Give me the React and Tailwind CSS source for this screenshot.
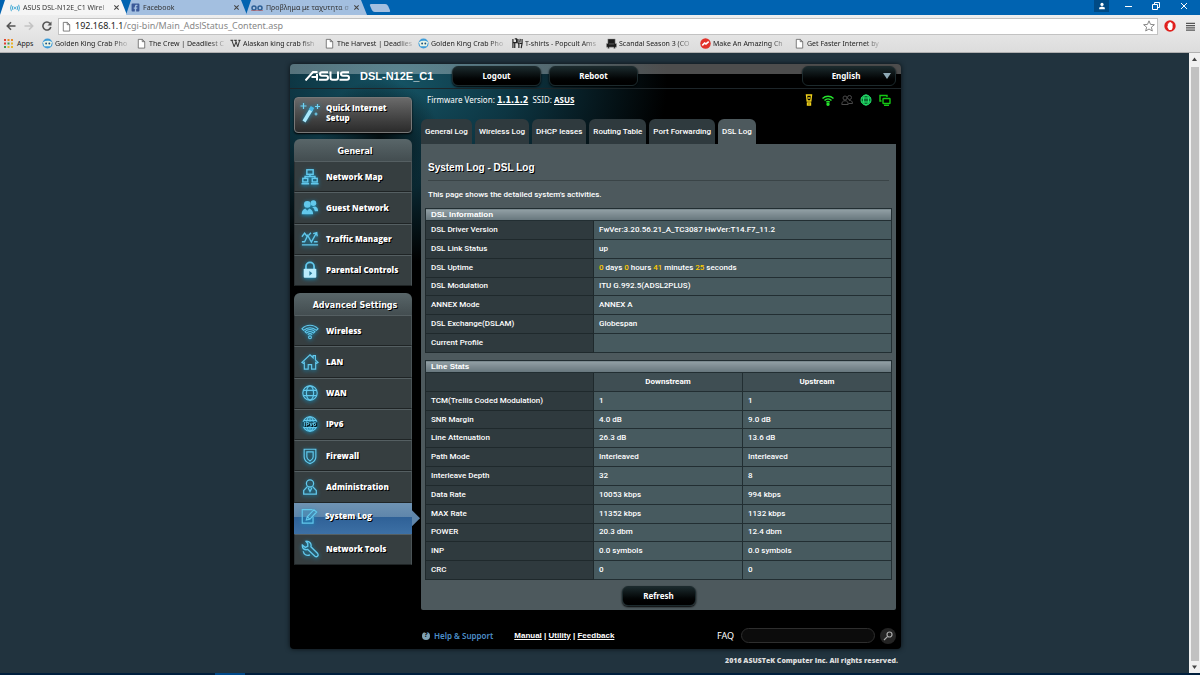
import { FaFacebookSquare } from 'react-icons/fa'

const VERDANA = "font-['DejaVu_Sans',sans-serif]"
const TAHOMA = "font-['Noto_Sans',sans-serif]"
const HEAVY = "font-['Open_Sans',sans-serif] font-extrabold"
const BTN = 'h-5 rounded-md border border-[#1c2a2d] bg-linear-to-b from-[#1b2a2d] via-[#080d0e] to-black text-[8px] font-bold text-white shadow-[0_1px_2px_#000]'

const BOOKMARKS = [
  { label: 'Golden King Crab Pho', icon: 'fish' },
  { label: 'The Crew | Deadliest C', icon: 'page' },
  { label: 'Alaskan king crab fish', icon: 'wiki' },
  { label: 'The Harvest | Deadlies', icon: 'page' },
  { label: 'Golden King Crab Pho', icon: 'fish' },
  { label: 'T-shirts - Popcult Ams', icon: 'shirt' },
  { label: 'Scandal Season 3 (CO', icon: 'sofa' },
  { label: 'Make An Amazing Ch', icon: 'chart' },
  { label: 'Get Faster Internet by', icon: 'page' },
]

const GENERAL = [
  { label: 'Network Map', icon: 'map' },
  { label: 'Guest Network', icon: 'guest' },
  { label: 'Traffic Manager', icon: 'traffic' },
  { label: 'Parental Controls', icon: 'lock' },
]

const ADVANCED = [
  { label: 'Wireless', icon: 'wifi' },
  { label: 'LAN', icon: 'house' },
  { label: 'WAN', icon: 'globe' },
  { label: 'IPv6', icon: 'ipv6' },
  { label: 'Firewall', icon: 'shield' },
  { label: 'Administration', icon: 'admin' },
  { label: 'System Log', icon: 'log' },
  { label: 'Network Tools', icon: 'tools' },
]

const LOG_TABS = ['General Log', 'Wireless Log', 'DHCP leases', 'Routing Table', 'Port Forwarding', 'DSL Log']

const Num = ({ children }) => <span className="text-[#fc0]">{children}</span>

const DSL_INFO = [
  ['DSL Driver Version', 'FwVer:3.20.56.21_A_TC3087 HwVer:T14.F7_11.2'],
  ['DSL Link Status', 'up'],
  ['DSL Uptime', <><Num>0</Num> days <Num>0</Num> hours <Num>41</Num> minutes <Num>25</Num> seconds</>],
  ['DSL Modulation', 'ITU G.992.5(ADSL2PLUS)'],
  ['ANNEX Mode', 'ANNEX A'],
  ['DSL Exchange(DSLAM)', 'Globespan'],
  ['Current Profile', ''],
]

const LINE_STATS = [
  ['TCM(Trellis Coded Modulation)', '1', '1'],
  ['SNR Margin', '4.0 dB', '9.0 dB'],
  ['Line Attenuation', '26.3 dB', '13.6 dB'],
  ['Path Mode', 'Interleaved', 'Interleaved'],
  ['Interleave Depth', '32', '8'],
  ['Data Rate', '10053 kbps', '994 kbps'],
  ['MAX Rate', '11352 kbps', '1132 kbps'],
  ['POWER', '20.3 dbm', '12.4 dbm'],
  ['INP', '0.0 symbols', '0.0 symbols'],
  ['CRC', '0', '0'],
]

const MENU_ICONS = {
  map: (
    <g fill="none" strokeWidth="1.6">
      <rect x="6.5" y="2" width="7" height="5" />
      <rect x="2" y="11.5" width="5.5" height="4" /><rect x="12.5" y="11.5" width="5.5" height="4" />
      <path d="M10 7v2.5M4.5 11.5V9.5h11v2M.5 17.5h8.5M11 17.5h8.5" />
    </g>
  ),
  guest: (
    <g stroke="none" fill="currentColor">
      <circle cx="13.8" cy="4.6" r="3.1" /><circle cx="7" cy="6" r="3.7" />
      <path d="M12.3 9l3.5-.6c2.2.7 3.2 2.4 3.2 5.1h-3.6C14.8 11.3 13.8 10 12.3 9z" />
      <path d="M.8 17c0-3.8 1.5-5.7 4-6.5L7 13l2.2-2.5c2.5.8 4.3 2.7 4.3 6.5z" />
    </g>
  ),
  traffic: (
    <g fill="none" strokeWidth="1.5">
      <path d="M1 13h3l3.500-7 4 7.500L17 3.500M13.500 4l4-1 .5 4M1 7.500l3-4 3 4M8.500 6L11 3M14.500 13h4M1 16.500h18" />
    </g>
  ),
  lock: (
    <g>
      <path d="M5.500 9V6a4.500 4.500 0 0 1 9 0v3" fill="none" strokeWidth="2" />
      <rect x="3" y="8.500" width="14" height="10" rx="1" fill="#b9ecfd" stroke="none" />
      <path d="M9.300 11l3.200 2.500-3.200 2.800z" fill="#28799a" stroke="none" />
    </g>
  ),
  wifi: (
    <g fill="none" strokeWidth="1.2">
      <path d="M1 7.500C6 2.200 14 2.200 19 7.500l-1.800 1.800C13 5.300 7 5.300 2.800 9.300zM4.500 10.800c3.200-3.200 7.800-3.200 11 0l-1.500 1.500c-2.300-2.200-5.700-2.200-8 0zM7.500 14c1.500-1.300 3.500-1.300 5 0" />
      <circle cx="10" cy="17" r="1.600" />
    </g>
  ),
  house: (
    <path d="M1 10.500L10 2l3.500 3.300V3H16v4.700l3 2.800-1.500 1-1.200-1V18h-4.500v-5H8v5H3.700v-7.500l-1.200 1z" fill="none" strokeWidth="1.3" />
  ),
  globe: (
    <g fill="none" strokeWidth="1.3">
      <circle cx="10" cy="10" r="8" /><ellipse cx="10" cy="10" rx="4" ry="8" />
      <path d="M2.500 7h15M2.500 13h15" />
    </g>
  ),
  ipv6: (
    <g>
      <g fill="none" strokeWidth="1.2">
        <circle cx="10" cy="10" r="8" /><ellipse cx="10" cy="10" rx="4" ry="8" /><path d="M3 6h14M3 14h14M10 2v16" />
      </g>
      <rect x="1" y="7.500" width="18" height="5.500" fill="#1d5468" stroke="none" />
      <text x="10" y="12.500" textAnchor="middle" fontSize="6.5" fontWeight="bold" fill="currentColor" stroke="none">IPv6</text>
    </g>
  ),
  shield: (
    <g fill="none" strokeWidth="1.3">
      <path d="M3.500 2.500h13V11c0 3.500-3 6-6.500 7.500C6.500 17 3.500 14.500 3.500 11z" />
      <path d="M6.500 5.500h7V11c0 2-1.500 3.300-3.500 4.500-2-1.200-3.500-2.500-3.500-4.500z" />
    </g>
  ),
  admin: (
    <g fill="none" strokeWidth="1.4">
      <circle cx="10" cy="6" r="4" />
      <path d="M7 9.500L3 14v4h14v-4l-4-4.500M8 11l2 4 2-4" />
    </g>
  ),
  log: (
    <g fill="none" strokeWidth="1.3">
      <path d="M14 3H2.500v15h12v-7" /><path d="M7 14.500l1-3.700L15.500 3 18.500 5.500 11 13.500zM8 10.800l3 2.700" />
    </g>
  ),
  tools: (
    <g fill="none" strokeWidth="1.5">
      <path d="M5.500 1.500c4-.5 6.500 2.500 5.500 6l7.500 7.500c1.500 2.500-1 4.500-3 3l-8-7.500C4 11.500 1 9.500 1.500 5.500l3.300 2.800L7.500 7V4z" />
      <path d="M2.500 12.500c.5 3.500 3.500 5.500 7.500 4" />
    </g>
  ),
}

function MenuIcon({ name }) {
  return (
    <svg viewBox="0 0 20 20" stroke="currentColor" className="size-[18px] shrink-0 text-[#62c8ec] drop-shadow-[0_1px_2px_#1294c4]">
      {MENU_ICONS[name]}
    </svg>
  )
}

const BOOKMARK_ICONS = {
  page: <path d="M2.500 1.500H7L9.500 4v7h-7zM6.800 1.500V4h2.700" fill="#fff" stroke="#666" strokeWidth=".9" />,
  fish: (
    <g>
      <circle cx="6" cy="6" r="5.500" fill="#3d9bd8" /><path d="M1 4.500c3-2 7-2 10 0L9.500 9h-7z" fill="#e9f3e4" />
      <circle cx="4.500" cy="6" r="1" fill="#174c7c" /><circle cx="8" cy="6" r="1" fill="#174c7c" />
    </g>
  ),
  wiki: <path d="M.5 2.500h3M4.500 2.500h3M9 2.500h2.500M2 2.500l2.500 7 2-5M6 2.500l2.500 7 2-7" fill="none" stroke="#222" strokeWidth="1" />,
  shirt: <path d="M1 1v10M3 1h2v4H3v6M6.500 1v4l1 2v4M9 1l-.5 4M11 1v5l-1 5M1 5h4M8 6h3" fill="none" stroke="#222" strokeWidth="1.3" />,
  sofa: <path d="M2 1h8v5h1.500v4H10v1.500H8.500V10h-5v1.500H2V10H.5V6H2zM3 6.500h6" fill="#1b1b1b" stroke="#aaa" strokeWidth=".5" />,
  chart: <g><circle cx="6" cy="6" r="5.700" fill="#e2322a" /><path d="M2.500 8L5 5.500l1.500 1L9.500 4" fill="none" stroke="#fff" strokeWidth="1.7" /></g>,
}

function BrowserTab({ active, icon, title }) {
  return (
    <div className={`flex h-[15px] items-center gap-[3px] pr-[7px] [clip-path:polygon(0_100%,5px_0,calc(100%-6px)_0,100%_100%)] ${active ? 'w-[127px] bg-[#f5f5f5] pl-2.5' : '-ml-px w-[121px] bg-[#a3bfe0] pl-[5px]'}`}>
      {icon}
      <span className="flex-1 text-[7px] leading-[14px] whitespace-nowrap text-[#333] [mask-image:linear-gradient(90deg,#000_85%,#0003)]">{title}</span>
      <button aria-label="Close tab" className="text-[#444]">
        <svg viewBox="0 0 8 8" className="size-[7px]"><path d="M1.500 1.500l5 5M6.500 1.500l-5 5" stroke="currentColor" strokeWidth="1.2" /></svg>
      </button>
    </div>
  )
}

function BrowserChrome() {
  return (
    <header className={`${TAHOMA} bg-linear-to-b from-[#f5f5f5] to-[#dcdcdc]`}>
      <div className="flex h-[15px] items-start bg-[#0063b1]">
        <BrowserTab
          active
          title="ASUS DSL-N12E_C1 Wirel"
          icon={<svg viewBox="0 0 12 10" className="h-2 w-2.5 shrink-0" fill="none" stroke="#2a9fd0" strokeWidth="1.1"><circle cx="6" cy="5" r="1" /><path d="M3.500 2.500q-1.500 2.500 0 5M1.500 1q-2 4 0 8M8.500 2.500q1.500 2.500 0 5M10.500 1q2 4 0 8" /></svg>}
        />
        <BrowserTab title="Facebook" icon={<FaFacebookSquare className="size-[9px] shrink-0 text-[#3b5998]" />} />
        <BrowserTab
          title="Προβλημα με ταχυτητα σ"
          icon={<svg viewBox="0 0 12 8" className="h-2 w-3 shrink-0" fill="none" stroke="#2d5f95" strokeWidth="1.5"><circle cx="3" cy="4" r="2" /><circle cx="9" cy="4" r="2" /><path d="M0 6.500h12" stroke="#b55" strokeWidth=".6" /></svg>}
        />
        <button aria-label="New tab" className="mt-1 ml-1 h-2 w-[18px] skew-x-[24deg] rounded-xs bg-[#a3bfe0]" />
        <div className="ml-auto flex items-center text-white">
          <button aria-label="User" className="mr-4 flex h-3 w-[15px] items-center justify-center bg-[#004a85]">
            <svg viewBox="0 0 10 10" className="size-2" fill="currentColor"><circle cx="5" cy="3" r="2" /><path d="M1.500 9V7l3.500-1.500L8.500 7v2z" /></svg>
          </button>
          <button aria-label="Minimize" className="mr-5 h-px w-[7px] bg-white" />
          <button aria-label="Restore" className="mr-5">
            <svg viewBox="0 0 8 8" className="size-2" fill="none" stroke="currentColor"><path d="M.5 2.500h5v5h-5zM2.500 2.500v-2h5v5h-2" /></svg>
          </button>
          <button aria-label="Close" className="mr-3">
            <svg viewBox="0 0 8 8" className="size-2" stroke="currentColor"><path d="M1 1l6 6M7 1L1 7" /></svg>
          </button>
        </div>
      </div>

      <div className="flex h-5 items-center pt-0.5 pl-1.5">
        <button aria-label="Back" className="mr-2 text-[#555]">
          <svg viewBox="0 0 10 10" className="size-2.5" fill="none" stroke="currentColor" strokeWidth="1.6"><path d="M9.500 5H1.500M5 1.300L1.300 5 5 8.700" /></svg>
        </button>
        <button aria-label="Forward" className="mr-2 text-[#c4c4c4]">
          <svg viewBox="0 0 10 10" className="size-2.5" fill="none" stroke="currentColor" strokeWidth="1.6"><path d="M.5 5h8M5 1.300L8.700 5 5 8.700" /></svg>
        </button>
        <button aria-label="Reload" className="mr-1.5 text-[#555]">
          <svg viewBox="0 0 10 10" className="size-2.5" fill="none" stroke="currentColor" strokeWidth="1.6"><path d="M8 2.500a4 4 0 1 0 .8 3.500" /><path d="M9.500.5V4.500H5.500z" fill="currentColor" stroke="none" /></svg>
        </button>
        <div className="flex h-[17px] flex-1 items-center gap-[3px] border border-[#c2c2c2] bg-white px-0.5">
          <svg viewBox="0 0 12 12" className="size-[11px] shrink-0">{BOOKMARK_ICONS.page}</svg>
          <div className="flex-1 text-[9px] leading-[14px] text-[#888]"><span className="text-[#222]">192.168.1.1</span>/cgi-bin/Main_AdslStatus_Content.asp</div>
          <button aria-label="Bookmark this page" className="text-[#888]">
            <svg viewBox="0 0 12 12" className="size-3" fill="none" stroke="currentColor"><path d="M6 .8l1.500 3.600 3.900.3-3 2.500.9 3.800L6 9l-3.300 2 .9-3.800-3-2.500 3.900-.3z" /></svg>
          </button>
        </div>
        <button aria-label="AdBlock" className="mx-1.5">
          <svg viewBox="0 0 12 12" className="size-3"><circle cx="6" cy="6" r="5.700" fill="#e0201c" /><path d="M3.800 5.500V3.500h1V2.500h1V2h1v.7h1v.8h.8V8L7.500 10H5L3.300 7z" fill="#fff" /></svg>
        </button>
        <button aria-label="Menu" className="mr-[5px] ml-1 text-[#555]">
          <svg viewBox="0 0 10 10" className="size-[9px]" stroke="currentColor" strokeWidth="1.5"><path d="M0 1.500h10M0 4h10M0 6.500h10M0 9h10" /></svg>
        </button>
      </div>

      <nav className="flex h-[18px] items-center overflow-hidden border-b border-[#b0b0b0] pl-1 text-[7px] leading-3 text-[#222]">
        <a href="#apps" className="mr-1.5 flex w-8 items-center gap-1">
          <svg viewBox="0 0 9 9" className="size-[9px] shrink-0">
            <path d="M0 0h2v2H0zM0 3.500h2v2H0z" fill="#e04030" /><path d="M3.500 0h2v2h-2zM7 0h2v2H7z" fill="#e88a2a" />
            <path d="M3.500 3.500h2v2h-2zM0 7h2v2H0z" fill="#3a9a4a" /><path d="M7 3.500h2v2H7zM3.500 7h2v2h-2zM7 7h2v2H7z" fill="#e6b52c" />
          </svg>
          Apps
        </a>
        {BOOKMARKS.map(({ label, icon }, i) => (
          <a key={i} href="#bookmark" className="mr-[9px] flex w-[85px] shrink-0 items-center gap-0.5">
            <svg viewBox="0 0 12 12" className="size-[11px] shrink-0">{BOOKMARK_ICONS[icon]}</svg>
            <span className="flex-1 whitespace-nowrap [mask-image:linear-gradient(90deg,#000_80%,#0003)]">{label}</span>
          </a>
        ))}
      </nav>
    </header>
  )
}

function StatusIcons() {
  return (
    <div className="flex items-center gap-[7px]">
      <svg viewBox="0 0 12 12" className="size-3" fill="none" stroke="#f2d21b" strokeWidth="1.4"><path d="M3.500 1h5L7.800 7H4.200zM6 3v2M4.500 9h3v2h-3z" /></svg>
      <svg viewBox="0 0 12 12" className="size-3" fill="none" stroke="#25e62d" strokeWidth="1.4"><path d="M.5 4.500c3.200-3 7.800-3 11 0M2.500 6.500c2-2 5-2 7 0M4.300 8.300c1-.9 2.400-.9 3.400 0" /><circle cx="6" cy="10.200" r="1" fill="#25e62d" /></svg>
      <svg viewBox="0 0 12 12" className="size-3" fill="none" stroke="#4a4a4a"><circle cx="4" cy="4" r="2" /><circle cx="8.500" cy="3.500" r="2" /><path d="M.8 10.500c0-2.500 1.200-3.800 3.200-3.800s3.200 1.300 3.200 3.800zM8 6.300c2.200 0 3.500 1 3.500 3.200H7.500" /></svg>
      <svg viewBox="0 0 12 12" className="size-3" fill="none" stroke="#25e66d"><circle cx="6" cy="6" r="5" fill="#0b6b32" /><ellipse cx="6" cy="6" rx="2.500" ry="5" /><path d="M1.500 4h9M1.500 8h9" /></svg>
      <svg viewBox="0 0 12 12" className="size-3" fill="none" stroke="#14c814" strokeWidth="1.4"><path d="M2.500 7H1V1.500h7V3" /><rect x="4" y="4.500" width="7" height="5" rx=".5" /><path d="M5 11.300h5" /></svg>
    </div>
  )
}

function TopBar() {
  return (
    <div className="flex h-[25px] items-center rounded-t-sm border-b border-[#1d2529] bg-[linear-gradient(#ffffff4d_0,#ffffff4d_10px,transparent_10px)] pr-[5px] pl-[15px]">
      <svg viewBox="0 0 90 20" role="img" aria-label="ASUS" className="h-2.5 w-[45px]" fill="none" stroke="#fff" strokeWidth="4">
        <path d="M1 19L16 2h9M13 12h11M24 6v13M46 2.500H34q-4 0-4 3.500t4 3.500h8q4 0 4 4t-4 4H28M51 1v12q0 4.500 4 4.500h7q4 0 4-4.500V1M88 2.500H76q-4 0-4 3.500t4 3.500h8q4 0 4 4t-4 4H69" />
      </svg>
      <h1 className="ml-2.5 w-[92px] font-['Liberation_Sans',sans-serif] text-[11px] leading-4 font-bold text-white">DSL-N12E_C1</h1>
      <button className={`${BTN} ${TAHOMA} w-[89px]`}>Logout</button>
      <button className={`${BTN} ${TAHOMA} ml-2 w-[89px]`}>Reboot</button>
      <div className="relative ml-auto flex">
        <select aria-label="Language" className={`${BTN} ${TAHOMA} w-[94px] appearance-none pr-1.5 [text-align-last:center]`}>
          <option>English</option>
        </select>
        <svg viewBox="0 0 8 6" className="pointer-events-none absolute top-[7px] right-[5px] h-[6px] w-2" fill="#8fa9b5"><path d="M0 0h8L4 6z" /></svg>
      </div>
    </div>
  )
}

function MenuSection({ title, items, rows }) {
  return (
    <nav>
      <h2 className={`${VERDANA} h-[22px] rounded-t-md bg-linear-to-b from-[#596669] to-[#434d50] pt-0.5 pl-1 text-center text-[8px] leading-[22px] font-bold text-white [text-shadow:1px_1px_0_#000]`}>{title}</h2>
      <ul className={`grid auto-rows-fr ${rows}`}>
        {items.map(({ label, icon }) => {
          const active = label === 'System Log'
          return (
            <li key={label} className={`relative ${active ? 'bg-[linear-gradient(#6f93b3_0,#5f86ab_45%,#2f6197_46%,#3d70a5)]' : 'border border-t-[#555f62] border-r-[#4a5356] border-b-[#1f2425] border-l-[#2a3032] bg-[#363e40]'}`}>
              <a href="#menu" className={`${HEAVY} flex h-full items-center gap-[7px] pl-1.5 text-[8px] text-white [text-shadow:1px_1px_0_#000] ${active ? 'pb-1' : ''}`}>
                <MenuIcon name={icon} />
                {label}
              </a>
              {active && <span className="absolute top-1/4 -right-2 h-4 w-2 bg-[#5f86ab] [clip-path:polygon(0_0,100%_50%,0_100%)]" />}
            </li>
          )
        })}
      </ul>
    </nav>
  )
}

function Sidebar() {
  return (
    <aside className="w-[118px] shrink-0 pt-2">
      <a href="#qis" className={`${HEAVY} mb-1.5 flex h-9 items-center gap-1 rounded-sm border border-[#777] bg-linear-to-b from-[#6a6a6a] to-[#2b2b2b] pb-1 pl-[5px] text-[8px] leading-[10px] text-white shadow-[0_1px_2px_#000] [text-shadow:1px_1px_0_#000]`}>
        <svg viewBox="0 0 22 22" className="size-[22px] shrink-0 drop-shadow-[0_0_2px_#1294c4]" stroke="#6fd3f5" fill="none">
          <path d="M4 19.500L11.500 7" strokeWidth="3.5" stroke="#a9e8fc" /><path d="M10.500 8.500l2-3.500" strokeWidth="4" stroke="#49b9e6" />
          <path d="M3.500 1v6M.5 4h6M17.500 2v5M15 4.500h5M16 10.500v3M14.500 12h3" strokeWidth="1.2" />
        </svg>
        <span>Quick Internet<br />Setup</span>
      </a>
      <MenuSection title="General" items={GENERAL} rows="min-h-[125px]" />
      <div className="h-[7px]" />
      <MenuSection title="Advanced Settings" items={ADVANCED} rows="min-h-[250px]" />
    </aside>
  )
}

const TABLE = 'w-full table-fixed border-collapse border border-[#222e32] text-[8px] leading-[10px] font-medium text-white'
const BAND = "h-3 border border-[#222e32] bg-linear-to-b from-[#92a0a5] to-[#66757c] pl-[5px] text-left font-['Liberation_Sans',sans-serif] font-bold leading-[11px]"
const LABEL = 'border border-[#1f292c] bg-[#2f3a3e] pl-[5px] text-left font-medium'
const VALUE = 'border border-[#222e32] bg-[#475a5f] pl-[5px]'
const COLUMN = 'border border-[#222e32] bg-[#3f4e53] font-bold'

function LogPanel() {
  return (
    <section className="rounded-b-xs bg-[#4d595d] px-1 pt-[17px] pb-1 font-['Roboto',sans-serif] text-[8px] text-white">
      <h2 className="mx-[3px] h-5 border-b border-[#3a4447] font-['Liberation_Sans',sans-serif] text-[10px] leading-[14px] font-bold [text-shadow:1px_1px_0_#000]">System Log - DSL Log</h2>
      <p className="mx-[3px] pt-2 pb-2 leading-[11px] font-medium">This page shows the detailed system's activities.</p>

      <table className={`${TABLE} h-[145px]`}>
        <colgroup><col className="w-[168px]" /><col /></colgroup>
        <thead><tr><th colSpan={2} className={BAND}>DSL Information</th></tr></thead>
        <tbody>
          {DSL_INFO.map(([name, value]) => (
            <tr key={name}><th scope="row" className={LABEL}>{name}</th><td className={VALUE}>{value}</td></tr>
          ))}
        </tbody>
      </table>

      <table className={`${TABLE} mt-[7px] h-[220px]`}>
        <colgroup><col className="w-[168px]" /><col /><col /></colgroup>
        <thead>
          <tr><th colSpan={3} className={BAND}>Line Stats</th></tr>
        </thead>
        <tbody>
          <tr>
            <td className={LABEL} />
            <th scope="col" className={COLUMN}>Downstream</th>
            <th scope="col" className={COLUMN}>Upstream</th>
          </tr>
          {LINE_STATS.map(([name, down, up]) => (
            <tr key={name}>
              <th scope="row" className={LABEL}>{name}</th>
              <td className={VALUE}>{down}</td>
              <td className={VALUE}>{up}</td>
            </tr>
          ))}
        </tbody>
      </table>

      <div className="mt-1.5 flex justify-center"><button className={`${BTN} ${TAHOMA} w-[74px]`}>Refresh</button></div>
    </section>
  )
}

function Footer() {
  return (
    <footer className={`${TAHOMA} flex h-[39px] items-center pt-3 pl-px text-[8px] text-white`}>
      <span className="mr-1 flex size-2 items-center justify-center rounded-full bg-[#7fa3b5] text-[7px] font-bold text-black">?</span>
      <a href="#help" className="mr-[21px] font-semibold text-[#4c8fc9]">Help &amp; Support</a>
      <p className="font-['Liberation_Sans',sans-serif] font-bold">
        <a href="#manual" className="underline">Manual</a> | <a href="#utility" className="underline">Utility</a> | <a href="#feedback" className="underline">Feedback</a>
      </p>
      <label htmlFor="faq" className="mr-[7px] ml-auto text-[9px]">FAQ</label>
      <input id="faq" className="h-[15px] w-[134px] rounded-full border border-[#2e2e2e] bg-[#0c0c0c] px-2" />
      <button aria-label="Search" className="ml-[5px] flex size-4 items-center justify-center rounded-full bg-[#242424] text-[#aaa]">
        <svg viewBox="0 0 10 10" className="size-2.5" fill="none" stroke="currentColor" strokeWidth="1.2"><circle cx="6.500" cy="3.500" r="2.500" /><path d="M4.700 5.300L1 9" /></svg>
      </button>
    </footer>
  )
}

export default function App() {
  return (
    <div className="flex min-h-screen flex-col bg-[#21333e]">
      <BrowserChrome />
      <div className="flex flex-1">
        <main className="flex-1 pt-[11px] pl-0.5">
          <div className="mx-auto max-w-[611px] rounded-sm bg-black bg-[radial-gradient(circle_at_90px_75px,#030d10_0,transparent_60px),radial-gradient(ellipse_at_110px_20px,#155364_0,#0d3542_30%,transparent_70%)] bg-[length:380px_200px] bg-no-repeat shadow-[0_0_5px_#0a1014]">
            <TopBar />
            <div className="flex gap-[9px] pr-[5px] pl-1">
              <Sidebar />
              <div className="min-w-0 flex-1">
                <div className="flex h-[30px] items-start justify-between pt-[5px] pr-[5px] pl-1.5">
                  <p className={`${TAHOMA} text-[8px] leading-[11px] text-white`}>
                    Firmware Version: <a href="#fw" className={`${VERDANA} font-bold underline`}>1.1.1.2</a>&nbsp; SSID: <a href="#ssid" className="font-bold underline">ASUS</a>
                  </p>
                  <StatusIcons />
                </div>
                <ul className="flex gap-[3px]">
                  {LOG_TABS.map(tab => (
                    <li key={tab}>
                      <a href="#tab" className={`block h-[25px] rounded-t-md px-1 font-['Roboto',sans-serif] text-[8px] leading-[25px] font-medium text-white ${tab === 'DSL Log' ? 'bg-[#4d595d]' : 'bg-[#2f3a3e]'}`}>{tab}</a>
                    </li>
                  ))}
                </ul>
                <LogPanel />
                <Footer />
              </div>
            </div>
          </div>
          <p className={`${HEAVY} mx-auto max-w-[611px] pt-[7px] pr-[3px] text-right text-[7px] leading-[10px] text-[#ddd]`}>2016 ASUSTeK Computer Inc. All rights reserved.</p>
        </main>
        <div className="flex w-[11px] flex-col items-center bg-[#f1f1f1]">
          <svg viewBox="0 0 11 14" className="h-3.5 w-[11px]" fill="#444"><path d="M5.500 4.500L8 8H3z" /></svg>
          <div className="w-2 flex-1 bg-[#c1c1c1]" />
          <svg viewBox="0 0 11 12" className="h-3 w-[11px]" fill="#444"><path d="M5.500 8L8 4.500H3z" /></svg>
        </div>
      </div>
      <div className="h-0.5 bg-[#001f3d] pl-[215px]"><div className="h-full w-[30px] bg-[#00498a]" /></div>
    </div>
  )
}
